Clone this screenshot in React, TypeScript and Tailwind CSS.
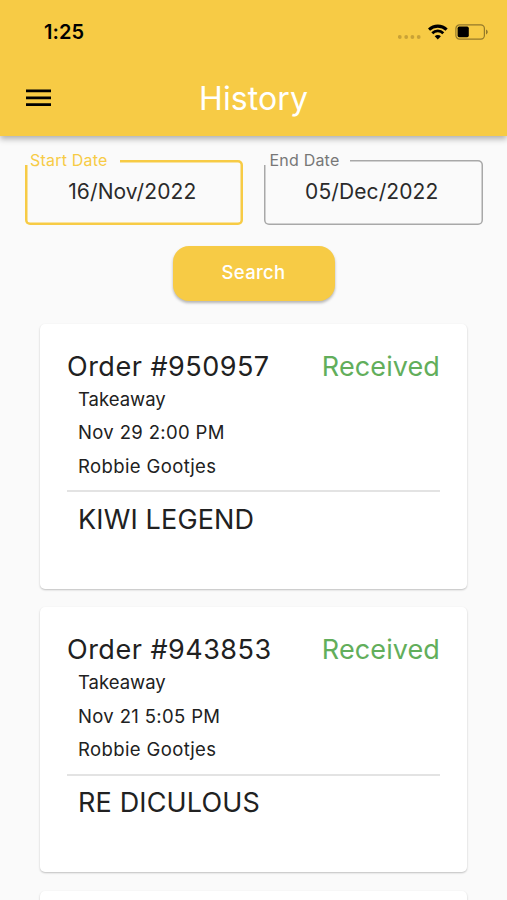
import clsx from "clsx";

const orders = [
  {
    id: "950957",
    type: "Takeaway",
    date: "Nov 29 2:00 PM",
    customer: "Robbie Gootjes",
    item: "KIWI LEGEND",
    status: "Received",
  },
  {
    id: "943853",
    type: "Takeaway",
    date: "Nov 21 5:05 PM",
    customer: "Robbie Gootjes",
    item: "RE DICULOUS",
    status: "Received",
  },
];

function StatusBar() {
  return (
    <div className="flex h-16 items-center justify-between pl-[44px] pr-[18px] text-black">
      <span className="text-[20px] font-semibold leading-6 tracking-[0.1px]">1:25</span>
      <div className="flex items-center">
        <svg width="24" height="6" viewBox="0 0 24 6" className="mt-[10px]" fill="#c9a236">
          <circle cx="1.8" cy="3" r="1.9" />
          <circle cx="8.2" cy="3" r="1.9" />
          <circle cx="14.4" cy="3" r="1.9" />
          <circle cx="20.7" cy="3" r="1.9" />
        </svg>
        <svg width="20" height="16" viewBox="0 0 20 16" className="ml-[6px]" fill="none" stroke="#000">
          <path d="M1 5.6a12.8 12.8 0 0 1 17.6 0" strokeWidth="3.1" />
          <path d="M4.3 9.2a7.9 7.9 0 0 1 11 0" strokeWidth="2.8" />
          <path d="M9.8 15.4 6.7 12.3a4.4 4.4 0 0 1 6.2 0Z" fill="#000" stroke="none" />
        </svg>
        <svg width="34" height="16" viewBox="0 0 34 16" className="ml-[7px]">
          <rect x="0.9" y="0.9" width="28.5" height="14.2" rx="3.6" fill="none" stroke="#94792a" strokeWidth="1.2" />
          <rect x="2.6" y="2.6" width="11.2" height="10.6" rx="1.6" fill="#000" />
          <path d="M31 5.6c2.3.8 2.3 4 0 4.8Z" fill="#94792a" />
        </svg>
      </div>
    </div>
  );
}

function Header() {
  return (
    <header className="relative z-10 h-[136px] shrink-0 bg-[#f7cb45] shadow-[0_3px_6px_rgba(0,0,0,0.3)]">
      <StatusBar />
      <div className="grid h-[68px] grid-cols-[1fr_auto_1fr] items-center pl-[26px]">
        <button type="button" aria-label="Menu">
          <svg width="25" height="18" viewBox="0 0 25 18">
            <path d="M0 1.9h25M0 8.8h25M0 15.6h25" stroke="#000" strokeWidth="2.7" />
          </svg>
        </button>
        <h1 className="-translate-x-[13px] pt-px text-[32px] leading-9 tracking-[0.1px] text-white">History</h1>
      </div>
    </header>
  );
}

type DateFieldProps = {
  label: string;
  value: string;
  active?: boolean;
};

function DateField({ label, value, active }: DateFieldProps) {
  return (
    <div
      className={clsx(
        "relative flex h-[64.5px] w-[218.5px] justify-center rounded-[5px] pt-4 pr-[3px]",
        active ? "shadow-[inset_0_0_0_2.5px_#f7cb45]" : "shadow-[inset_0_0_0_1.5px_#a8a8a8]",
      )}
    >
      <span
        className={clsx("absolute -left-px -top-px h-[6px] bg-[#fafafa]", active ? "w-[96px]" : "w-[87px]")}
      />
      <label
        className={clsx(
          "absolute -top-2 whitespace-nowrap text-[16px] leading-4 tracking-[0.2px]",
          active ? "left-[5.5px] text-[#f7cb45]" : "left-[5.5px] text-[#777]",
        )}
      >
        {label}
      </label>
      <span className="text-[21px] leading-8 tracking-[0.1px] text-[#2a2a2a]">{value}</span>
    </div>
  );
}

type Order = (typeof orders)[number];

function OrderCard({ order }: { order: Order }) {
  return (
    <article className="h-[265px] shrink-0 rounded-[5px] bg-white px-[27px] pt-[26.5px] text-[#212121] shadow-[0_1px_2px_rgba(0,0,0,0.24)]">
      <div className="flex justify-between text-[27px] leading-8">
        <h2 className="tracking-[0.5px]">Order #{order.id}</h2>
        <span className="tracking-[0.1px] text-[#62ae5b]">{order.status}</span>
      </div>
      <div className="pl-[11px] text-[18.5px] leading-[33.75px]">
        <p>{order.type}</p>
        <p className="tracking-[0.35px]">{order.date}</p>
        <p className="tracking-[0.38px]">{order.customer}</p>
      </div>
      <hr className="mt-[6.5px] border-t-2 border-[#e3e3e3]" />
      <p className="mt-[11.5px] pl-[11px] text-[27px] leading-8 tracking-[0.15px]">{order.item}</p>
    </article>
  );
}

export default function App() {
  return (
    <div className="flex h-[900px] w-[507px] flex-col overflow-hidden bg-[#fafafa] font-['Inter',sans-serif]">
      <Header />
      <main className="flex min-h-0 flex-1 flex-col overflow-hidden pt-6">
        <div className="flex shrink-0 justify-between px-[24.5px]">
          <DateField label="Start Date" value="16/Nov/2022" active />
          <DateField label="End Date" value="05/Dec/2022" />
        </div>
        <button
          type="button"
          className="mt-[21.5px] h-[54.5px] w-[162px] shrink-0 self-center rounded-[16px] bg-[#f7cb45] text-[18.5px] font-medium tracking-[0.3px] text-white shadow-[0_2px_3px_rgba(0,0,0,0.28)]"
        >
          Search
        </button>
        <section className="mt-[23.5px] flex flex-col gap-[18.25px] px-10">
          {orders.map((order) => (
            <OrderCard key={order.id} order={order} />
          ))}
          <div className="h-10 shrink-0 rounded-[5px] bg-white shadow-[0_1px_2px_rgba(0,0,0,0.24)]" />
        </section>
      </main>
    </div>
  );
}
